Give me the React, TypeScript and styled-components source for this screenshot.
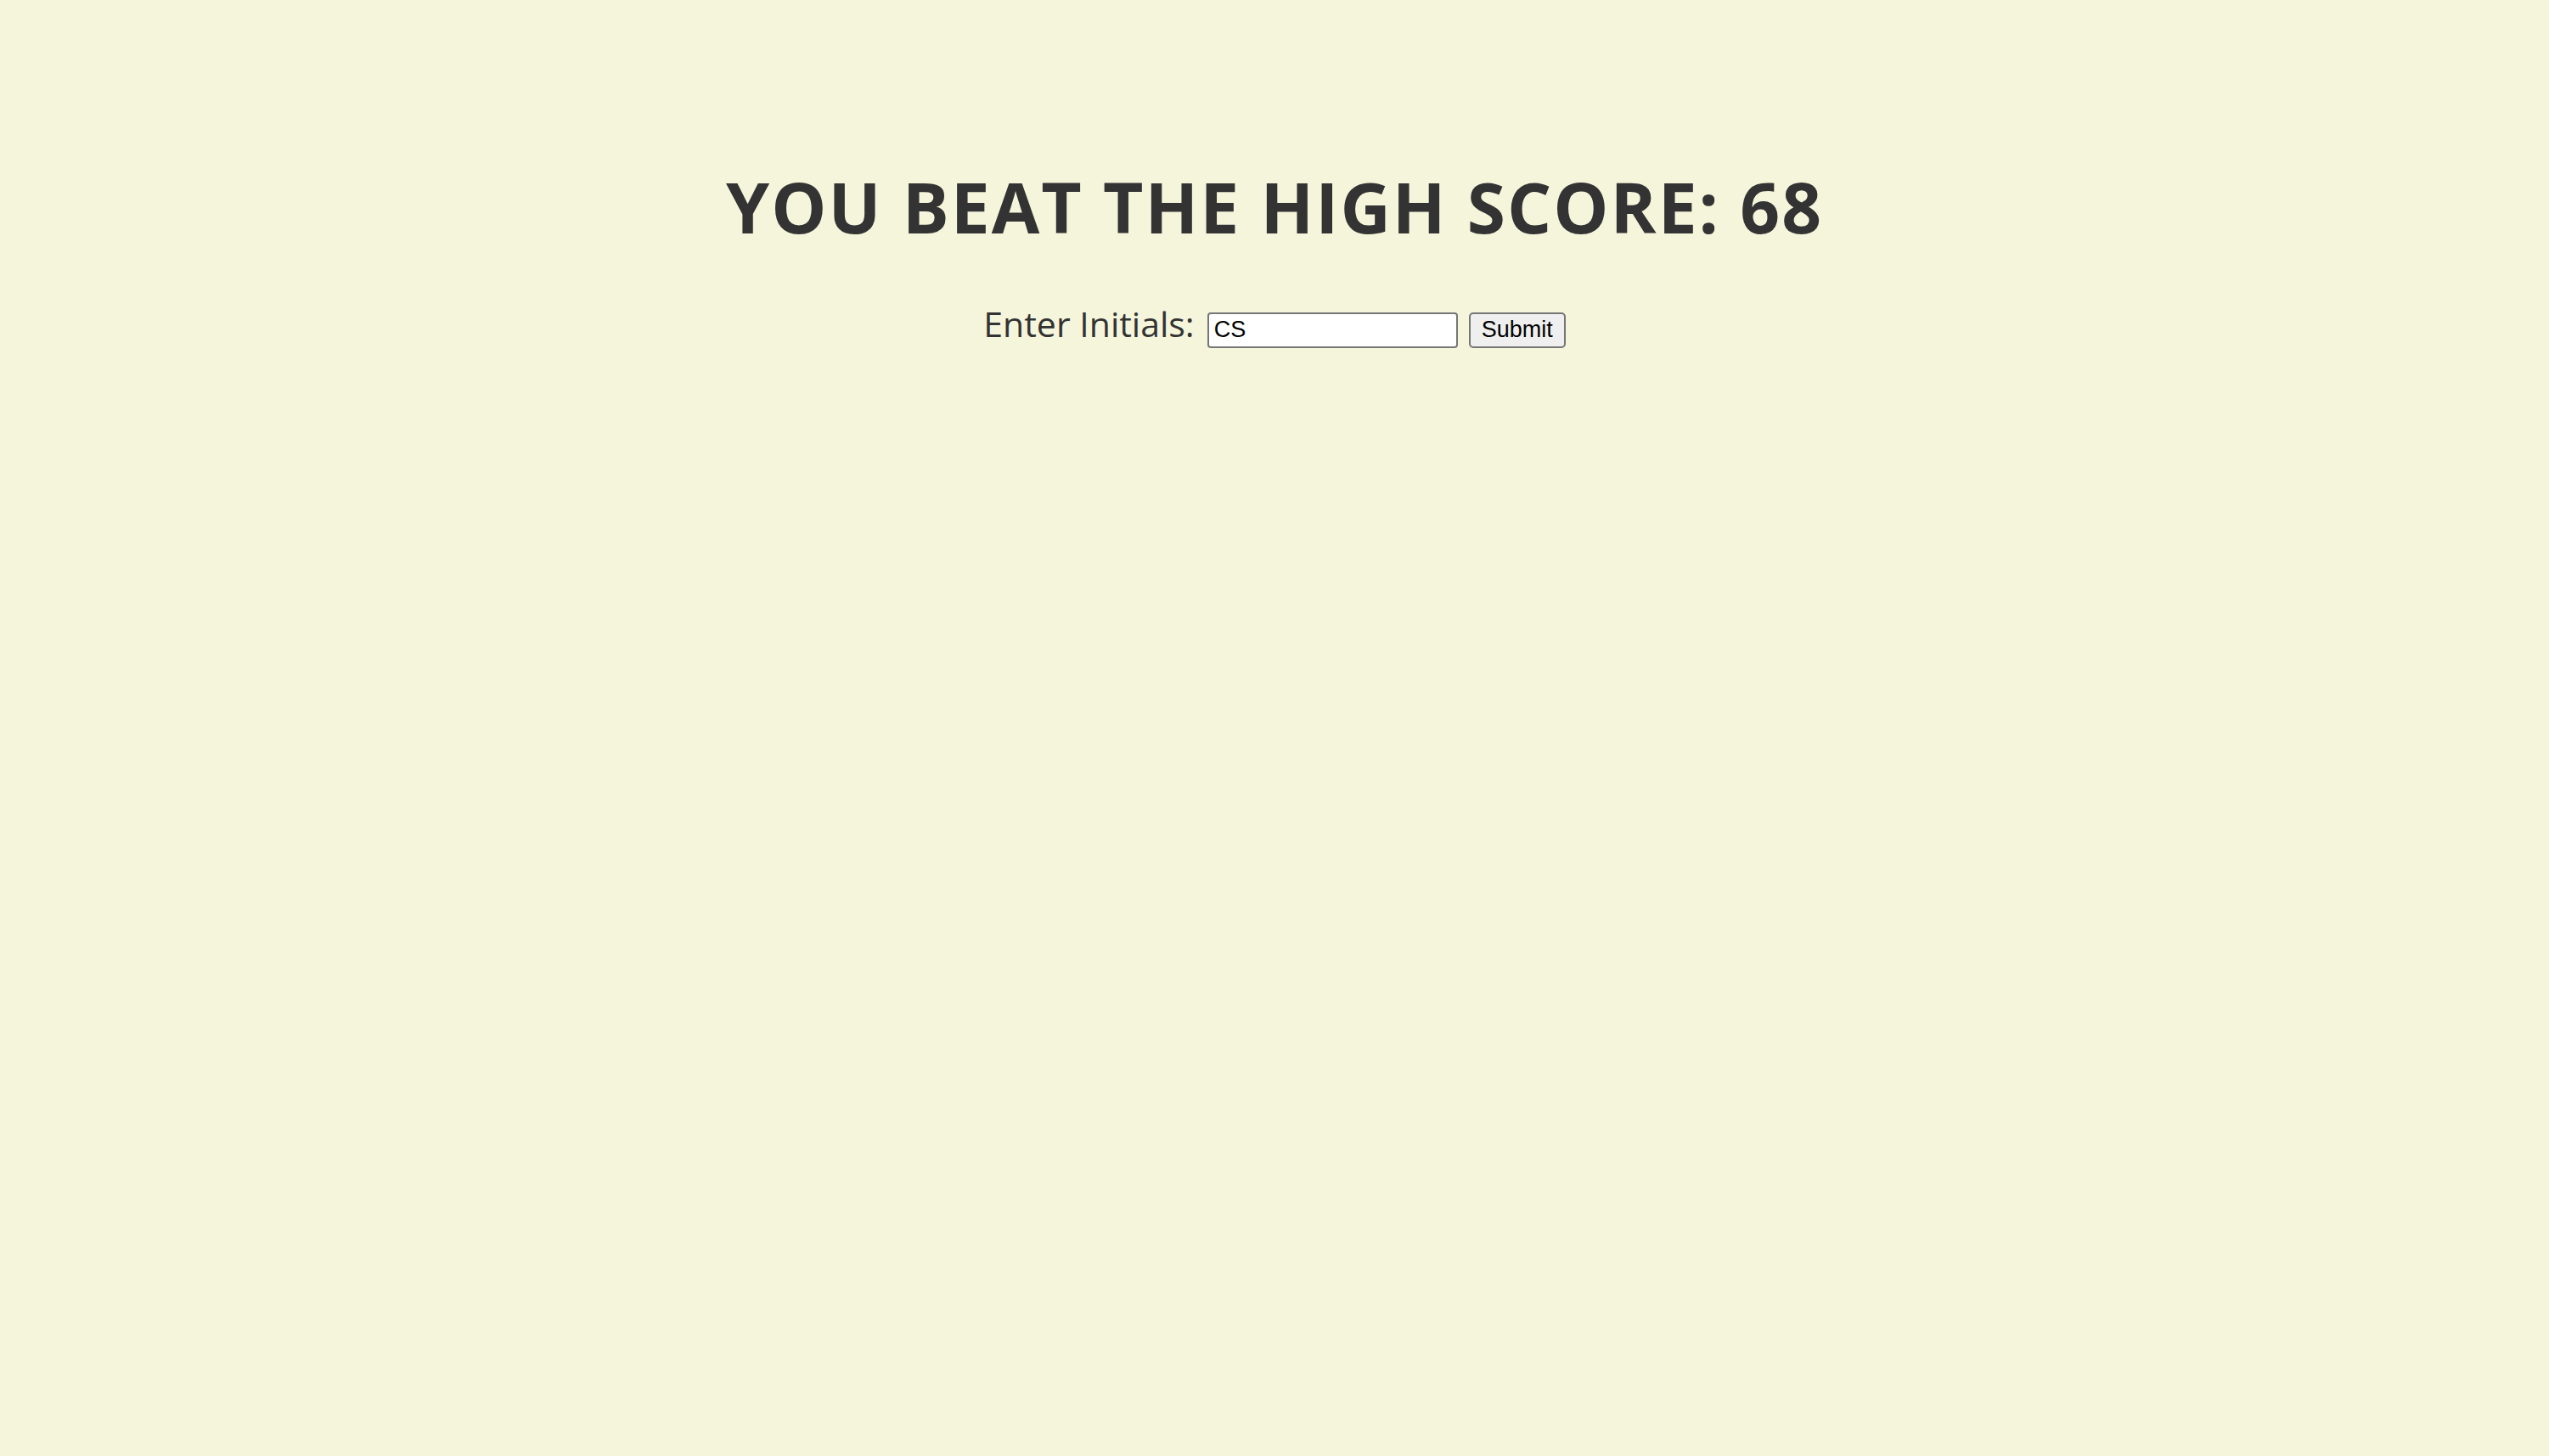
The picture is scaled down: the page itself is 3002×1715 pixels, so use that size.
import React, { useState } from "react";
import styled, { createGlobalStyle } from "styled-components";

const GlobalStyle = createGlobalStyle`
  html, body {
    margin: 0;
    padding: 0;
    background: #f5f5dc;
  }
  body {
    color: #333;
    font-family: "Open Sans", "Noto Sans", "DejaVu Sans", sans-serif;
  }
`;

const Page = styled.main`
  min-height: 1715px;
  padding-top: 194px;
  box-sizing: border-box;
  background: #f5f5dc;
`;

const Title = styled.h1`
  margin: 0;
  text-align: center;
  font-size: 82px;
  line-height: 98px;
  font-weight: 700;
  letter-spacing: 2px;
  white-space: nowrap;
  color: #333;
`;

const Form = styled.form`
  margin-top: 68px;
  display: flex;
  justify-content: center;
  align-items: baseline;
`;

const Label = styled.label`
  font-size: 41px;
  line-height: 42px;
  color: #333;
  white-space: nowrap;
`;

const Input = styled.input`
  box-sizing: border-box;
  width: 295px;
  height: 42px;
  margin-left: 15px;
  padding: 0 6px;
  border: 2px solid #767676;
  border-radius: 4px;
  background: #fff;
  color: #000;
  font-family: "Liberation Sans", Arial, sans-serif;
  font-size: 27px;
  outline: none;
`;

const Button = styled.button`
  box-sizing: border-box;
  height: 42px;
  margin-left: 13px;
  padding: 0 13px;
  border: 2px solid #767676;
  border-radius: 5px;
  background: #efefef;
  color: #000;
  font-family: "Liberation Sans", Arial, sans-serif;
  font-size: 27px;
  cursor: pointer;
`;

export default function App() {
  const [initials, setInitials] = useState("CS");
  return (
    <>
      <GlobalStyle />
      <Page>
        <Title>YOU BEAT THE HIGH SCORE: 68</Title>
        <Form onSubmit={(e) => e.preventDefault()}>
          <Label htmlFor="initials">Enter Initials:</Label>
          <Input
            id="initials"
            type="text"
            value={initials}
            onChange={(e) => setInitials(e.target.value)}
          />
          <Button type="submit">Submit</Button>
        </Form>
      </Page>
    </>
  );
}
